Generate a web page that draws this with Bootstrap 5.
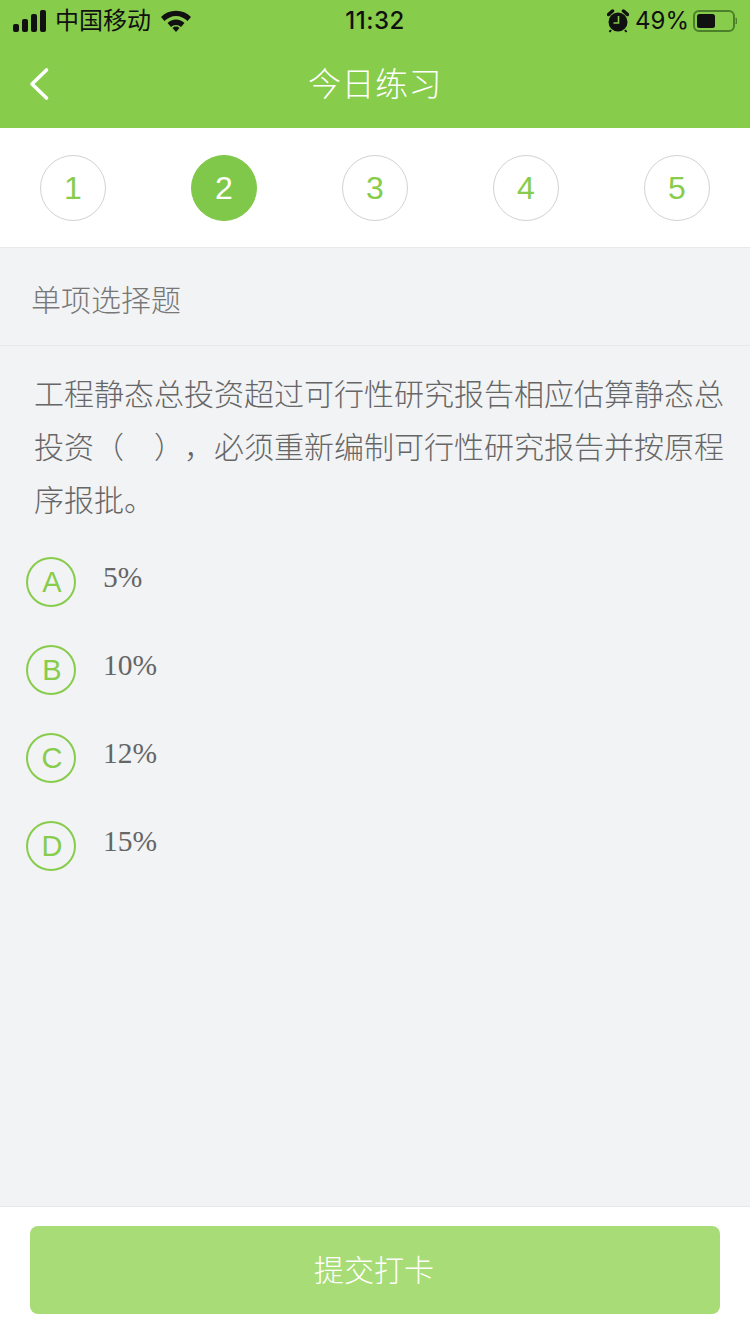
<!DOCTYPE html>
<html lang="zh-CN">
<head>
  <meta charset="UTF-8">
  <title>今日练习</title>
  <link href="https://cdn.jsdelivr.net/npm/bootstrap@5.3.0/dist/css/bootstrap.min.css" rel="stylesheet">
  <style>
    html, body { height: 1334px; overflow: hidden; }
    body { font-family: "Liberation Sans", "Noto Sans CJK SC", sans-serif; background: #f2f3f5; color: #666; text-spacing-trim: space-all; }
    .app-page { height: 1334px; }
    .app-top { height: 128px; background: #87cc4b; }
    .status-row { height: 42px; padding: 0 13px; font-size: 24px; color: #111; }
    .status-left, .status-right { width: 300px; }
    .carrier { margin-left: 8px; margin-right: 10px; font-size: 24px; line-height: 1; }
    .clock { font-size: 24px; font-weight: 500; font-family: Inter, "Liberation Sans", sans-serif; letter-spacing: .5px; }
    .batt-pct { font-size: 24px; font-family: Inter, "Liberation Sans", sans-serif; font-weight: 400; margin: 0 4px 0 6px; }
    .title-row { height: 86px; padding-bottom: 2px; }
    .back-btn { width: 78px; padding-left: 28px; }
    .page-title { font-size: 33px; color: #fff; font-weight: 300; letter-spacing: .5px; line-height: 1; }
    .step-bar { height: 120px; background: #fff; border-bottom: 1px solid #e7e8ea; padding: 0 40px; }
    .step-dot { width: 66px; height: 66px; border: 1px solid #d2d2d2; border-radius: 50%; color: #87cc4b; font-size: 32px; line-height: 1; }
    .step-dot.is-on { background: #7fc84a; border-color: #7fc84a; color: #fff; }
    .type-row { height: 98px; padding: 8px 0 0 31px; border-bottom: 1px solid #e7e8ea; font-size: 30px; font-weight: 300; color: #777; }
    .question-text { margin: 0; padding: 22px 20px 0 34px; font-size: 30px; font-weight: 300; line-height: 53px; color: #666; }
    .option-list { padding: 30px 0 0 26px; }
    .option-row { height: 88px; }
    .option-mark { width: 50px; height: 50px; border: 2px solid #87cc4b; border-radius: 50%; color: #87cc4b; font-size: 29px; line-height: 1; padding: 1px 0 0 2px; }
    .option-text { margin-left: 27px; margin-top: 2px; font-family: "Liberation Serif", serif; font-size: 29.5px; line-height: 36px; color: #666; }
    .bottom-bar { height: 128px; background: #fff; border-top: 1px solid #e7e8ea; padding: 19px 30px 0; }
    .submit-btn { width: 690px; height: 88px; padding-right: 14px; background: #a8dc76; border: 0; border-radius: 8px; color: #fff; font-size: 30px; font-weight: 300; }
    .submit-btn:disabled { background: #a8dc76; color: #fff; opacity: 1; }
  </style>
</head>
<body>
<div class="app-page d-flex flex-column">
  <header class="app-top">
    <div class="status-row d-flex align-items-center justify-content-between">
      <div class="status-left d-flex align-items-center">
        <svg width="34" height="22" viewBox="0 0 34 22" fill="#111">
          <rect x="0" y="14" width="6" height="8" rx="2"/>
          <rect x="9" y="9" width="6" height="13" rx="2"/>
          <rect x="18" y="4" width="6" height="18" rx="2"/>
          <rect x="27" y="0" width="6" height="22" rx="2"/>
        </svg>
        <span class="carrier">中国移动</span>
        <svg width="30" height="22" viewBox="0 0 30 22">
          <path d="M0 7 A21 21 0 0 1 30 7 L26.5 11 A16 16 0 0 0 3.500 11 Z" fill="#111"/>
          <path d="M6.500 13 A12 12 0 0 1 23.500 13 L20 17 A7 7 0 0 0 10 17 Z" fill="#111"/>
          <path d="M11.500 18 A5 5 0 0 1 18.500 18 L15 22 Z" fill="#111"/>
        </svg>
      </div>
      <div class="clock">11:32</div>
      <div class="status-right d-flex align-items-center justify-content-end">
        <svg width="22" height="24" viewBox="0 0 22 24">
          <circle cx="11" cy="13" r="9.500" fill="#111"/>
          <path d="M11.500 7 V14 H6.500" fill="none" stroke="#87cc4b" stroke-width="1.6"/>
          <path d="M1.500 5.500 L5.500 2 M20.500 5.500 L16.500 2" stroke="#111" stroke-width="3.500" stroke-linecap="round"/>
          <path d="M4 21 L2.500 23 M18 21 L19.500 23" stroke="#111" stroke-width="2"/>
        </svg>
        <span class="batt-pct">49%</span>
        <svg width="44" height="24" viewBox="0 0 44 24">
          <rect x="1" y="2" width="40" height="20" rx="5" fill="none" stroke="#4b7f2a" stroke-width="2"/>
          <rect x="4" y="5" width="18" height="14" rx="2.500" fill="#111"/>
          <path d="M43 9 Q44 12 43 15" fill="none" stroke="#4b7f2a" stroke-width="1.500"/>
        </svg>
      </div>
    </div>
    <div class="title-row d-flex align-items-center">
      <div class="back-btn">
        <svg class="d-block" width="22" height="34" viewBox="0 0 22 34">
          <path d="M18.500 3 L4 17 L18.500 31" fill="none" stroke="#fff" stroke-width="3.600" stroke-linecap="round" stroke-linejoin="round"/>
        </svg>
      </div>
      <div class="page-title flex-grow-1 text-center">今日练习</div>
      <div class="back-btn"></div>
    </div>
  </header>

  <nav class="step-bar d-flex align-items-center justify-content-between">
    <div class="step-dot d-flex align-items-center justify-content-center">1</div>
    <div class="step-dot is-on d-flex align-items-center justify-content-center">2</div>
    <div class="step-dot d-flex align-items-center justify-content-center">3</div>
    <div class="step-dot d-flex align-items-center justify-content-center">4</div>
    <div class="step-dot d-flex align-items-center justify-content-center">5</div>
  </nav>

  <main class="flex-grow-1">
    <div class="type-row d-flex align-items-center">单项选择题</div>
    <p class="question-text">工程静态总投资超过可行性研究报告相应估算静态总投资（　），必须重新编制可行性研究报告并按原程序报批。</p>
    <div class="option-list">
      <div class="option-row d-flex align-items-start">
        <div class="option-mark d-flex align-items-center justify-content-center">A</div>
        <div class="option-text">5%</div>
      </div>
      <div class="option-row d-flex align-items-start">
        <div class="option-mark d-flex align-items-center justify-content-center">B</div>
        <div class="option-text">10%</div>
      </div>
      <div class="option-row d-flex align-items-start">
        <div class="option-mark d-flex align-items-center justify-content-center">C</div>
        <div class="option-text">12%</div>
      </div>
      <div class="option-row d-flex align-items-start">
        <div class="option-mark d-flex align-items-center justify-content-center">D</div>
        <div class="option-text">15%</div>
      </div>
    </div>
  </main>

  <footer class="bottom-bar">
    <button class="btn submit-btn d-block" type="button" disabled>提交打卡</button>
  </footer>
</div>
<script src="https://cdn.jsdelivr.net/npm/bootstrap@5.3.0/dist/js/bootstrap.bundle.min.js"></script>
</body>
</html>
